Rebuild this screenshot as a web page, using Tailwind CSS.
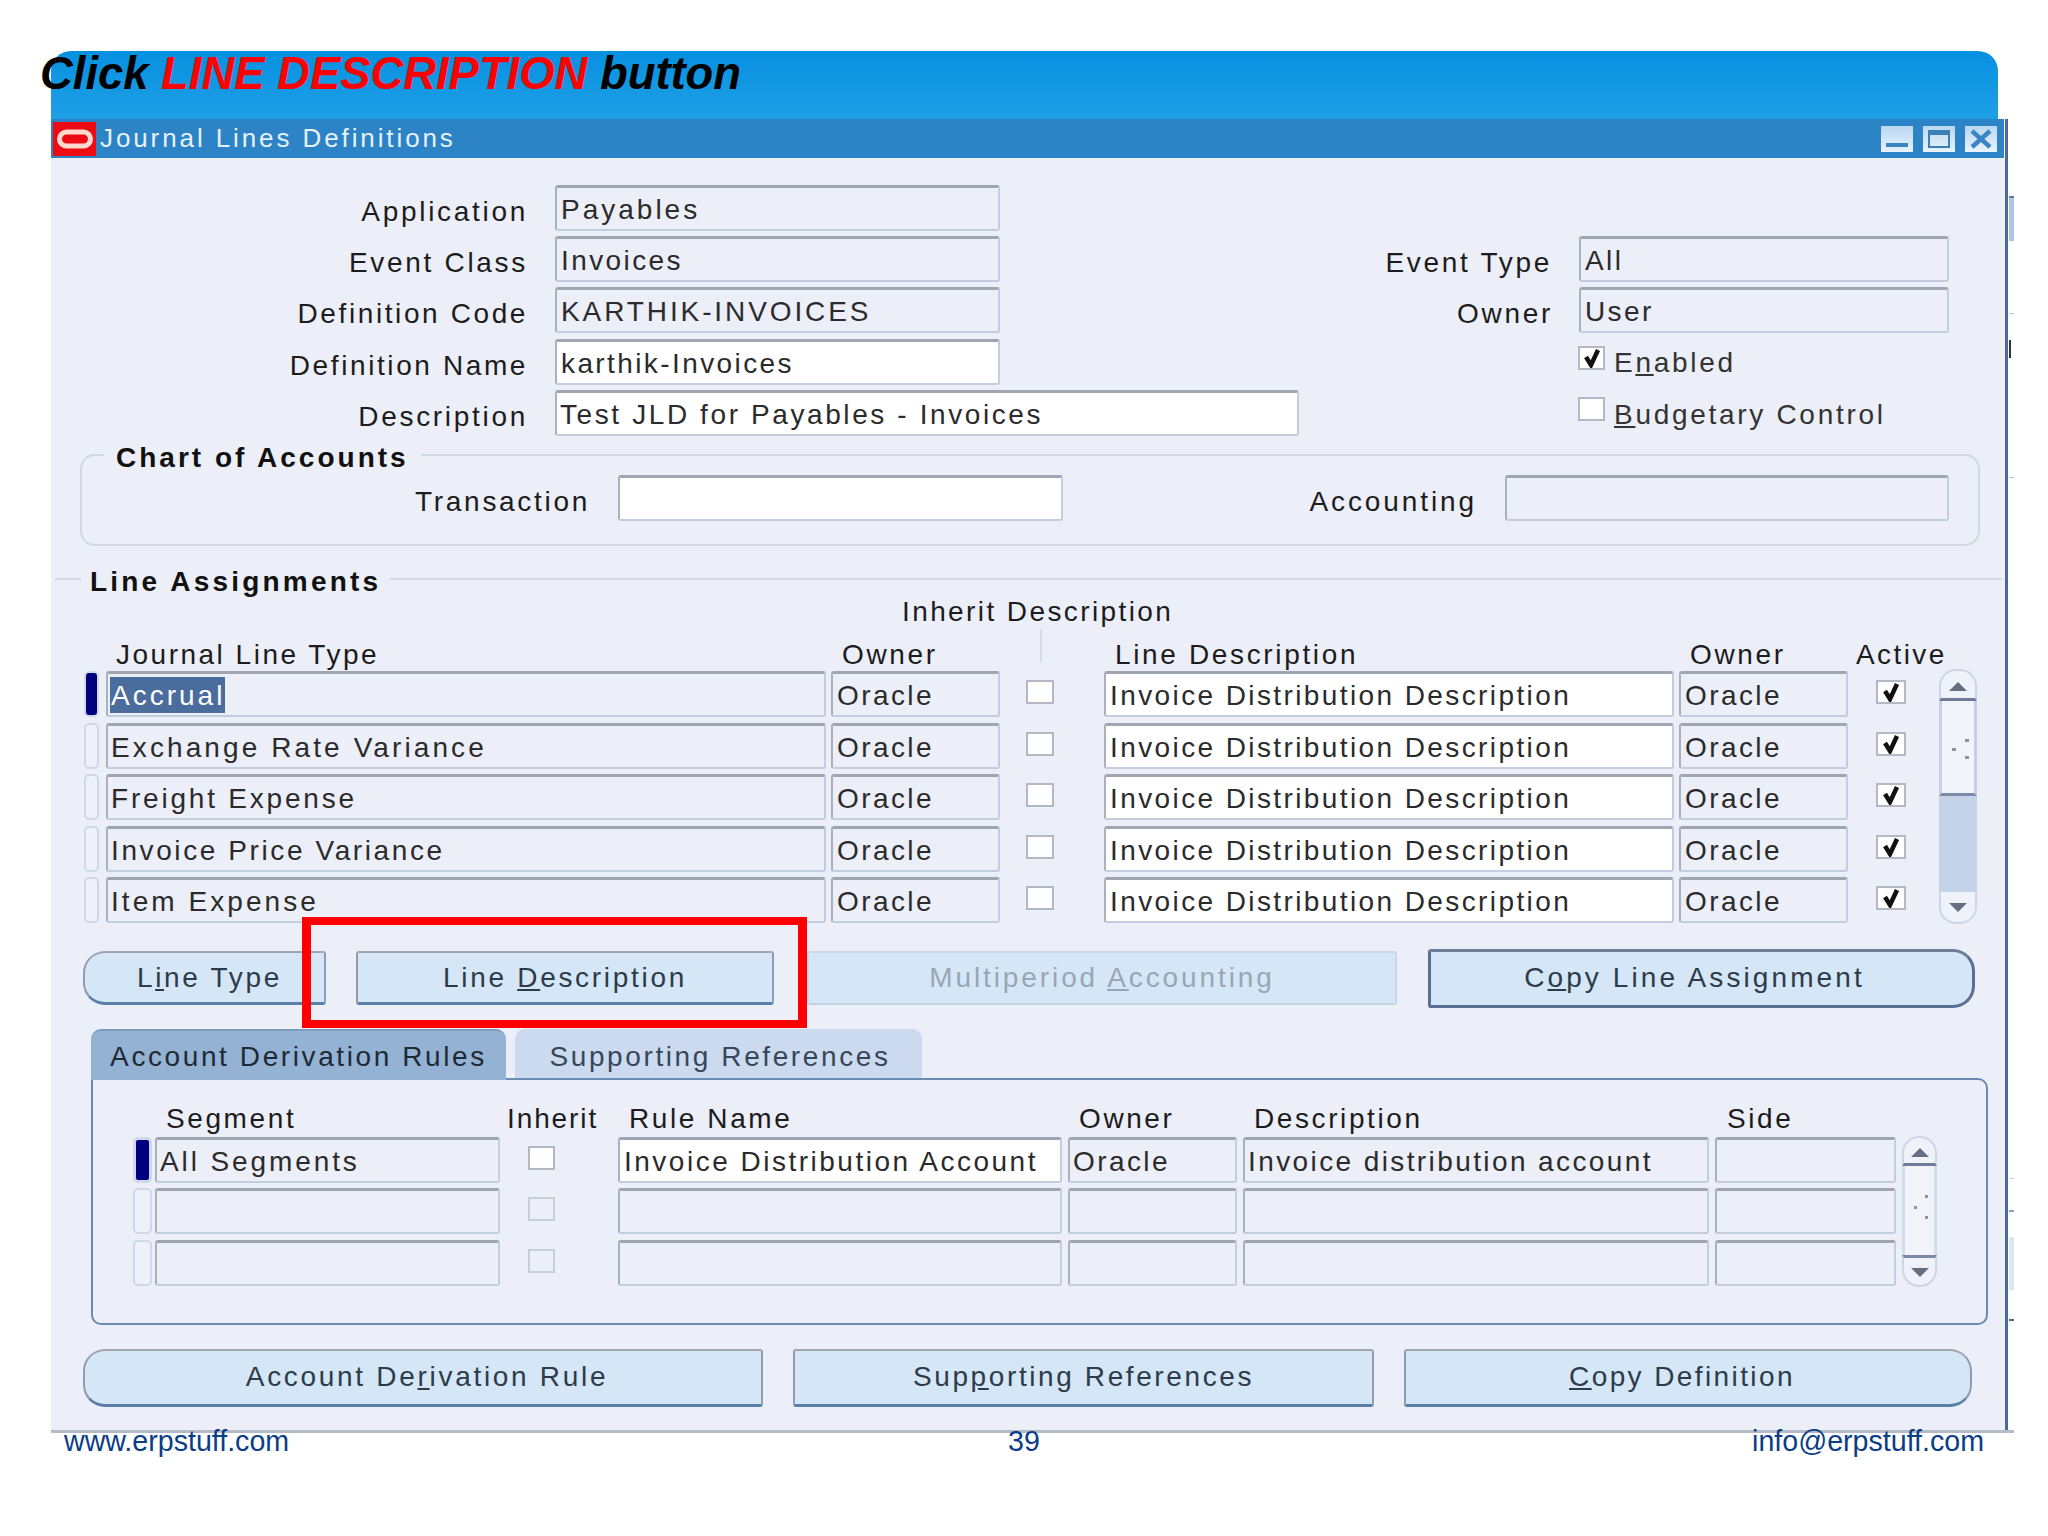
<!DOCTYPE html>
<html lang="en">
<head>
  <meta charset="UTF-8">
  <title>Journal Lines Definitions</title>
  <script src="https://cdn.jsdelivr.net/npm/@tailwindcss/browser@4"></script>
</head>
<body class="bg-white">
<div class="relative w-[2048px] h-[1536px] overflow-hidden bg-white pt-[51px] font-['Liberation_Sans',sans-serif] text-[28px] leading-none tracking-[2.4px] text-[#2b2b2b]">

  <!-- bits of the window behind -->
  <div class="absolute left-[2009px] top-[196px] w-[5px] h-[45px] bg-[#a9c6e2] border-t-2 border-[#5c7ba6]"></div>
  <div class="absolute left-[2009px] top-[313px] w-[5px] h-[1px] bg-[#b8c4d6]"></div>
  <div class="absolute left-[2009px] top-[340px] w-[2px] h-[18px] bg-[#333333]"></div>
  <div class="absolute left-[2009px] top-[477px] w-[5px] h-[1px] bg-[#b8c4d6]"></div>
  <div class="absolute left-[2009px] top-[1178px] w-[5px] h-[1px] bg-[#c8d2e0]"></div>
  <div class="absolute left-[2009px] top-[1210px] w-[5px] h-[27px] border-t-2 border-[#8ea3c0] bg-white"></div>
  <div class="absolute left-[2009px] top-[1237px] w-[5px] h-[53px] bg-[#dbe6f3]"></div>
  <div class="absolute left-[2009px] top-[1319px] w-[5px] h-[2px] bg-[#4c6a99]"></div>

  <!-- slide heading -->
  <div class="ml-[51px] w-[1947px] h-[68px] rounded-t-[20px] bg-gradient-to-b from-[#0590e0] to-[#1ea0e6]">
    <h1 class="-ml-[11px] text-[45.4px] leading-[45px] tracking-normal font-bold italic text-black whitespace-nowrap">Click <span class="text-[#ff0000]">LINE DESCRIPTION</span> button</h1>
  </div>

  <!-- window -->
  <div class="ml-[51px] w-[1957px] border-r-[3px] border-[#4c6a99]">
    <div class="flex items-center h-[39px] w-[1953px] bg-[#2c84c6]">
      <div class="flex items-center justify-center ml-[2px] w-[43px] h-[34px] bg-[#ee0a12]">
        <svg width="36" height="20" viewBox="0 0 36 20"><rect x="2.5" y="3" width="31" height="14" rx="7" fill="none" stroke="#ffd8d0" stroke-width="5"/></svg>
      </div>
      <span class="ml-[4px] -mt-[2px] text-[26px] tracking-[2.9px] text-[#e6f1fc]">Journal Lines Definitions</span>
      <div class="ml-auto mr-[7px] flex gap-[10px]">
        <div class="w-[32px] h-[26px] bg-gradient-to-b from-[#b9d7f0] to-[#e8f3fc]"><svg width="32" height="26" viewBox="0 0 32 26"><rect x="5" y="17" width="22" height="4" fill="#3a86c4"/></svg></div>
        <div class="w-[32px] h-[26px] bg-gradient-to-b from-[#b9d7f0] to-[#e8f3fc]"><svg width="32" height="26" viewBox="0 0 32 26"><rect x="6" y="5" width="20" height="16" fill="none" stroke="#3a7fb8" stroke-width="2"/><rect x="6" y="5" width="20" height="4" fill="#3a7fb8"/></svg></div>
        <div class="w-[32px] h-[26px] bg-gradient-to-b from-[#b9d7f0] to-[#e8f3fc]"><svg width="32" height="26" viewBox="0 0 32 26"><path d="M7 5 L25 21 M25 5 L7 21" stroke="#3a86c4" stroke-width="4.5"/></svg></div>
      </div>
    </div>

    <div class="h-[1272px] bg-[#eceef8]">

      <!-- header fields -->
      <div class="grid grid-cols-[504px_445px_550px_398px] gap-y-[5.2px] pt-[27px] items-start">
        <div class="pr-[27px] pt-[13px] text-right tracking-[2.7px] text-[#1c1c1c]">Application</div>
        <div class="flex items-center h-[46px] rounded-[3px] border-2 border-t-[3px] border-[#c3cde0] border-t-[#a1a5b1] border-l-[#aab0bd] bg-[#eceef8] pl-[4px] pt-[3px] tracking-[3px] whitespace-nowrap">Payables</div>
        <div></div><div></div>

        <div class="pr-[27px] pt-[13px] text-right tracking-[2.7px] text-[#1c1c1c]">Event Class</div>
        <div class="flex items-center h-[46px] rounded-[3px] border-2 border-t-[3px] border-[#c3cde0] border-t-[#a1a5b1] border-l-[#aab0bd] bg-[#eceef8] pl-[4px] pt-[3px] whitespace-nowrap">Invoices</div>
        <div class="pt-[13px] text-right tracking-[2.7px] text-[#1c1c1c]"><span class="relative left-[2px]">Event Type</span></div>
        <div class="ml-[29px] w-[370px] flex items-center h-[46px] rounded-[3px] border-2 border-t-[3px] border-[#c3cde0] border-t-[#a1a5b1] border-l-[#aab0bd] bg-[#eceef8] pl-[4px] pt-[3px] whitespace-nowrap">All</div>

        <div class="pr-[27px] pt-[13px] text-right tracking-[2.6px] text-[#1c1c1c]">Definition Code</div>
        <div class="flex items-center h-[46px] rounded-[3px] border-2 border-t-[3px] border-[#c3cde0] border-t-[#a1a5b1] border-l-[#aab0bd] bg-[#eceef8] pl-[4px] pt-[3px] tracking-[2.9px] whitespace-nowrap">KARTHIK-INVOICES</div>
        <div class="pt-[13px] text-right tracking-[2.7px] text-[#1c1c1c]"><span class="relative left-[3px]">Owner</span></div>
        <div class="ml-[29px] w-[370px] flex items-center h-[46px] rounded-[3px] border-2 border-t-[3px] border-[#c3cde0] border-t-[#a1a5b1] border-l-[#aab0bd] bg-[#eceef8] pl-[4px] pt-[3px] whitespace-nowrap">User</div>

        <div class="pr-[27px] pt-[13px] text-right tracking-[2.6px] text-[#1c1c1c]">Definition Name</div>
        <div class="flex items-center h-[46px] rounded-[3px] border-2 border-t-[3px] border-[#c3cde0] border-t-[#a1a5b1] border-l-[#aab0bd] bg-white pl-[4px] pt-[3px] whitespace-nowrap">karthik-Invoices</div>
        <div></div>
        <div class="ml-[28px] flex items-center h-[46px]">
          <span class="flex items-center justify-center -mt-[8px] w-[27px] h-[24px] border-2 border-[#b4b8c4] bg-white">
            <svg width="18" height="20" viewBox="0 0 18 20"><path d="M3 9 L8 17 L15 2" fill="none" stroke="#111" stroke-width="4.5"/></svg>
          </span>
          <span class="ml-[9px] pt-[3px] tracking-[2.7px] text-[#333]">E<u>n</u>abled</span>
        </div>

        <div class="pr-[27px] pt-[13px] text-right tracking-[2.7px] text-[#1c1c1c]">Description</div>
        <div class="col-span-2 w-[744px] flex items-center h-[46px] rounded-[3px] border-2 border-t-[3px] border-[#c3cde0] border-t-[#a1a5b1] border-l-[#aab0bd] bg-white pl-[3px] pt-[3px] tracking-[2.6px] whitespace-nowrap">Test JLD for Payables - Invoices</div>
        <div class="ml-[28px] flex items-center h-[46px]">
          <span class="-mt-[8px] w-[27px] h-[24px] border-2 border-[#b4b8c4] bg-white"></span>
          <span class="ml-[9px] pt-[5px] tracking-[2.7px] text-[#333]"><u>B</u>udgetary Control</span>
        </div>
      </div>

      <!-- chart of accounts -->
      <div class="relative mt-[18px] ml-[29px] w-[1900px] h-[92px] rounded-[15px] border-2 border-[#d0d8e6]">
        <div class="absolute -top-[13px] left-[22px] bg-[#eceef8] px-[12px] h-[30px] flex items-center font-bold tracking-[3px] text-[#111] whitespace-nowrap">Chart of Accounts</div>
        <div class="flex items-start pt-[19px]">
          <div class="w-[508px] pt-[13px] text-right tracking-[2.7px] text-[#1c1c1c]">Transaction</div>
          <div class="ml-[28px] w-[445px] h-[46px] rounded-[3px] border-2 border-t-[3px] border-[#c3cde0] border-t-[#a1a5b1] border-l-[#aab0bd] bg-white"></div>
          <div class="w-[414px] pt-[13px] text-right tracking-[2.9px] text-[#1c1c1c]">Accounting</div>
          <div class="ml-[28px] w-[444px] h-[46px] rounded-[3px] border-2 border-t-[3px] border-[#c3cde0] border-t-[#a1a5b1] border-l-[#aab0bd] bg-[#eceef8]"></div>
        </div>
      </div>

      <!-- line assignments -->
      <div class="flex items-center mt-[17px] ml-[4px] w-[1947px] h-[32px]">
        <div class="w-[26px] h-[2px] bg-[#d0d8e6]"></div>
        <span class="px-[9px] pt-[6px] font-bold tracking-[3.2px] text-[#111] whitespace-nowrap">Line Assignments</span>
        <div class="flex-1 h-[2px] bg-[#d0d8e6]"></div>
      </div>
      <div class="flex items-center h-[34px] ml-[851px] tracking-[2.4px] text-[#1c1c1c]">Inherit Description</div>

      <div class="flex ml-[33px] mt-[9px]">
        <div class="grid grid-cols-[22px_725px_195px_78px_575px_197px_30px] gap-y-[5.25px] items-start">
          <div></div>
          <div class="h-[28px] flex items-center pl-[10px] pt-[6px] tracking-[2.5px] text-[#1c1c1c]">Journal Line Type</div>
          <div class="h-[28px] flex items-center pl-[11px] pt-[6px] tracking-[2.65px] text-[#1c1c1c]">Owner</div>
          <div class="h-[28px]"><div class="-mt-[9px] ml-[14px] w-[2px] h-[33px] bg-[#d5dcea]"></div></div>
          <div class="h-[28px] flex items-center pl-[11px] pt-[6px] tracking-[2.65px] text-[#1c1c1c]">Line Description</div>
          <div class="h-[28px] flex items-center pl-[11px] pt-[6px] tracking-[2.65px] text-[#1c1c1c]">Owner</div>
          <div class="h-[28px] flex items-center -ml-[20px] pt-[6px] text-[#1c1c1c]">Active</div>

          <!-- row 1 -->
          <div class="w-[15px] h-[46px] rounded-[5px] border-2 border-[#cdd8ea] bg-[#00007f]"></div>
          <div class="w-[720px] flex items-center h-[46px] rounded-[3px] border-2 border-t-[3px] border-[#c3cde0] border-t-[#a1a5b1] border-l-[#aab0bd] bg-[#eceef8] pl-[2px] whitespace-nowrap"><span class="flex items-center h-[36px] bg-[#4a6d9e] text-white pl-[1px] pt-[3px] tracking-[3px]">Accrual</span></div>
          <div class="w-[169px] flex items-center h-[46px] rounded-[3px] border-2 border-t-[3px] border-[#c3cde0] border-t-[#a1a5b1] border-l-[#aab0bd] bg-[#eceef8] pl-[4px] pt-[3px] whitespace-nowrap">Oracle</div>
          <div class="mt-[9px] w-[28px] h-[24px] border-2 border-[#b4b8c4] bg-white"></div>
          <div class="w-[570px] flex items-center h-[46px] rounded-[3px] border-2 border-t-[3px] border-[#c3cde0] border-t-[#a1a5b1] border-l-[#aab0bd] bg-white pl-[4px] pt-[3px] tracking-[2.4px] whitespace-nowrap">Invoice Distribution Description</div>
          <div class="w-[169px] flex items-center h-[46px] rounded-[3px] border-2 border-t-[3px] border-[#c3cde0] border-t-[#a1a5b1] border-l-[#aab0bd] bg-[#eceef8] pl-[4px] pt-[3px] whitespace-nowrap">Oracle</div>
          <div class="mt-[9px] flex items-center justify-center w-[30px] h-[24px] border-2 border-[#b4b8c4] bg-white"><svg width="20" height="20" viewBox="0 0 20 20"><path d="M4 9 L9 17 L16 2" fill="none" stroke="#111" stroke-width="4.5"/></svg></div>

          <!-- row 2 -->
          <div class="w-[15px] h-[46px] rounded-[5px] border-2 border-[#cdd8ea] bg-[#eef0fa]"></div>
          <div class="w-[720px] flex items-center h-[46px] rounded-[3px] border-2 border-t-[3px] border-[#c3cde0] border-t-[#a1a5b1] border-l-[#aab0bd] bg-[#eceef8] pl-[3px] pt-[3px] tracking-[3.1px] whitespace-nowrap">Exchange Rate Variance</div>
          <div class="w-[169px] flex items-center h-[46px] rounded-[3px] border-2 border-t-[3px] border-[#c3cde0] border-t-[#a1a5b1] border-l-[#aab0bd] bg-[#eceef8] pl-[4px] pt-[3px] whitespace-nowrap">Oracle</div>
          <div class="mt-[9px] w-[28px] h-[24px] border-2 border-[#b4b8c4] bg-white"></div>
          <div class="w-[570px] flex items-center h-[46px] rounded-[3px] border-2 border-t-[3px] border-[#c3cde0] border-t-[#a1a5b1] border-l-[#aab0bd] bg-white pl-[4px] pt-[3px] tracking-[2.4px] whitespace-nowrap">Invoice Distribution Description</div>
          <div class="w-[169px] flex items-center h-[46px] rounded-[3px] border-2 border-t-[3px] border-[#c3cde0] border-t-[#a1a5b1] border-l-[#aab0bd] bg-[#eceef8] pl-[4px] pt-[3px] whitespace-nowrap">Oracle</div>
          <div class="mt-[9px] flex items-center justify-center w-[30px] h-[24px] border-2 border-[#b4b8c4] bg-white"><svg width="20" height="20" viewBox="0 0 20 20"><path d="M4 9 L9 17 L16 2" fill="none" stroke="#111" stroke-width="4.5"/></svg></div>

          <!-- row 3 -->
          <div class="w-[15px] h-[46px] rounded-[5px] border-2 border-[#cdd8ea] bg-[#eef0fa]"></div>
          <div class="w-[720px] flex items-center h-[46px] rounded-[3px] border-2 border-t-[3px] border-[#c3cde0] border-t-[#a1a5b1] border-l-[#aab0bd] bg-[#eceef8] pl-[3px] pt-[3px] tracking-[2.8px] whitespace-nowrap">Freight Expense</div>
          <div class="w-[169px] flex items-center h-[46px] rounded-[3px] border-2 border-t-[3px] border-[#c3cde0] border-t-[#a1a5b1] border-l-[#aab0bd] bg-[#eceef8] pl-[4px] pt-[3px] whitespace-nowrap">Oracle</div>
          <div class="mt-[9px] w-[28px] h-[24px] border-2 border-[#b4b8c4] bg-white"></div>
          <div class="w-[570px] flex items-center h-[46px] rounded-[3px] border-2 border-t-[3px] border-[#c3cde0] border-t-[#a1a5b1] border-l-[#aab0bd] bg-white pl-[4px] pt-[3px] tracking-[2.4px] whitespace-nowrap">Invoice Distribution Description</div>
          <div class="w-[169px] flex items-center h-[46px] rounded-[3px] border-2 border-t-[3px] border-[#c3cde0] border-t-[#a1a5b1] border-l-[#aab0bd] bg-[#eceef8] pl-[4px] pt-[3px] whitespace-nowrap">Oracle</div>
          <div class="mt-[9px] flex items-center justify-center w-[30px] h-[24px] border-2 border-[#b4b8c4] bg-white"><svg width="20" height="20" viewBox="0 0 20 20"><path d="M4 9 L9 17 L16 2" fill="none" stroke="#111" stroke-width="4.5"/></svg></div>

          <!-- row 4 -->
          <div class="w-[15px] h-[46px] rounded-[5px] border-2 border-[#cdd8ea] bg-[#eef0fa]"></div>
          <div class="w-[720px] flex items-center h-[46px] rounded-[3px] border-2 border-t-[3px] border-[#c3cde0] border-t-[#a1a5b1] border-l-[#aab0bd] bg-[#eceef8] pl-[3px] pt-[3px] tracking-[2.6px] whitespace-nowrap">Invoice Price Variance</div>
          <div class="w-[169px] flex items-center h-[46px] rounded-[3px] border-2 border-t-[3px] border-[#c3cde0] border-t-[#a1a5b1] border-l-[#aab0bd] bg-[#eceef8] pl-[4px] pt-[3px] whitespace-nowrap">Oracle</div>
          <div class="mt-[9px] w-[28px] h-[24px] border-2 border-[#b4b8c4] bg-white"></div>
          <div class="w-[570px] flex items-center h-[46px] rounded-[3px] border-2 border-t-[3px] border-[#c3cde0] border-t-[#a1a5b1] border-l-[#aab0bd] bg-white pl-[4px] pt-[3px] tracking-[2.4px] whitespace-nowrap">Invoice Distribution Description</div>
          <div class="w-[169px] flex items-center h-[46px] rounded-[3px] border-2 border-t-[3px] border-[#c3cde0] border-t-[#a1a5b1] border-l-[#aab0bd] bg-[#eceef8] pl-[4px] pt-[3px] whitespace-nowrap">Oracle</div>
          <div class="mt-[9px] flex items-center justify-center w-[30px] h-[24px] border-2 border-[#b4b8c4] bg-white"><svg width="20" height="20" viewBox="0 0 20 20"><path d="M4 9 L9 17 L16 2" fill="none" stroke="#111" stroke-width="4.5"/></svg></div>

          <!-- row 5 -->
          <div class="w-[15px] h-[46px] rounded-[5px] border-2 border-[#cdd8ea] bg-[#eef0fa]"></div>
          <div class="w-[720px] flex items-center h-[46px] rounded-[3px] border-2 border-t-[3px] border-[#c3cde0] border-t-[#a1a5b1] border-l-[#aab0bd] bg-[#eceef8] pl-[3px] pt-[3px] tracking-[3.05px] whitespace-nowrap">Item Expense</div>
          <div class="w-[169px] flex items-center h-[46px] rounded-[3px] border-2 border-t-[3px] border-[#c3cde0] border-t-[#a1a5b1] border-l-[#aab0bd] bg-[#eceef8] pl-[4px] pt-[3px] whitespace-nowrap">Oracle</div>
          <div class="mt-[9px] w-[28px] h-[24px] border-2 border-[#b4b8c4] bg-white"></div>
          <div class="w-[570px] flex items-center h-[46px] rounded-[3px] border-2 border-t-[3px] border-[#c3cde0] border-t-[#a1a5b1] border-l-[#aab0bd] bg-white pl-[4px] pt-[3px] tracking-[2.4px] whitespace-nowrap">Invoice Distribution Description</div>
          <div class="w-[169px] flex items-center h-[46px] rounded-[3px] border-2 border-t-[3px] border-[#c3cde0] border-t-[#a1a5b1] border-l-[#aab0bd] bg-[#eceef8] pl-[4px] pt-[3px] whitespace-nowrap">Oracle</div>
          <div class="mt-[9px] flex items-center justify-center w-[30px] h-[24px] border-2 border-[#b4b8c4] bg-white"><svg width="20" height="20" viewBox="0 0 20 20"><path d="M4 9 L9 17 L16 2" fill="none" stroke="#111" stroke-width="4.5"/></svg></div>
        </div>

        <!-- scrollbar -->
        <div class="ml-[33px] mt-[31px] w-[38px] h-[255px] flex flex-col">
          <div class="h-[32px] rounded-t-[17px] border-2 border-b-[3px] border-[#ced6e6] border-b-[#6f7b97] bg-[#f0f2fa] flex justify-center pt-[11px]"><svg width="18" height="9" viewBox="0 0 18 9"><path d="M9 0 L18 9 L0 9 Z" fill="#666f80"/></svg></div>
          <div class="h-[95px] border-x-[3px] border-b-[3px] border-[#c3d0e6] border-b-[#7d8aa5] bg-[#f2f3fb]">
            <svg width="32" height="92" viewBox="0 0 32 92"><g fill="#8b93a6"><rect x="10" y="47" width="4" height="3"/><rect x="23" y="38" width="4" height="3"/><rect x="23" y="55" width="4" height="3"/></g></svg>
          </div>
          <div class="flex-1 bg-[#c5d3e8]"></div>
          <div class="h-[32px] rounded-b-[17px] border-2 border-t-0 border-[#ced6e6] bg-[#f0f2fa] flex justify-center pt-[11px]"><svg width="18" height="9" viewBox="0 0 18 9"><path d="M0 0 L18 0 L9 9 Z" fill="#666f80"/></svg></div>
        </div>
      </div>

      <!-- line buttons -->
      <div class="flex items-center ml-[32px] mt-[25px] h-[59px] text-[#2d3b4a]">
        <div class="flex items-center justify-center w-[243px] h-[54px] pl-[10px] rounded-l-[22px] rounded-r-[3px] border-2 border-[#8f9db0] border-t-[#a0a5ae] border-b-[3px] border-b-[#5a7fa8] bg-[#d5e6f6]"><span class="tracking-[2.7px]">L<u>i</u>ne Type</span></div>
        <div class="flex items-center justify-center ml-[30px] w-[418px] h-[54px] rounded-[3px] border-2 border-[#8f9db0] border-t-[#a0a5ae] border-b-[3px] border-b-[#5a7fa8] bg-[#d5e6f6]"><span class="tracking-[2.7px]">Line <u>D</u>escription</span></div>
        <div class="flex items-center justify-center ml-[33px] w-[590px] h-[54px] rounded-[3px] border-2 border-[#cdd6e4] border-b-[#c3d3e6] bg-[#d5e6f6] text-[#98a6b6]"><span class="tracking-[2.9px]">Multiperiod <u>A</u>ccounting</span></div>
        <div class="flex items-center justify-center ml-[31px] w-[547px] h-[59px] pr-[14px] rounded-l-[3px] rounded-r-[22px] border-[3px] border-[#5a6f93] border-t-[#6e7d97] bg-[#d5e6f6]"><span class="tracking-[3.1px]">C<u>o</u>py Line Assignment</span></div>
      </div>

      <!-- tabs -->
      <div class="flex ml-[40px] mt-[21px] h-[49px] text-[#1f2a36]">
        <div class="relative z-10 flex items-center justify-center w-[415px] h-[51px] pt-[3px] rounded-t-[10px] border-t-2 border-[#7b9bbf] bg-[#93b2d4] tracking-[2.6px]">Account Derivation Rules</div>
        <div class="flex items-center justify-center ml-[9px] w-[407px] h-[49px] pt-[7px] pl-[3px] rounded-t-[10px] bg-[#ccdaf0] text-[#37475a] tracking-[2.6px]">Supporting References</div>
      </div>

      <div class="ml-[40px] w-[1897px] h-[247px] rounded-[10px] rounded-tl-none border-2 border-[#6b8cb2]">
        <div class="flex pl-[40px] pt-[21px]">
          <div class="grid grid-cols-[22px_373px_90px_450px_175px_472px_181px] gap-y-[5.4px] items-start">
            <div></div>
            <div class="h-[30px] flex items-center pl-[11px] pt-[6px] tracking-[2.6px] text-[#1c1c1c]">Segment</div>
            <div class="h-[30px] flex items-center -ml-[21px] pt-[6px] tracking-[1.9px] text-[#1c1c1c]">Inherit</div>
            <div class="h-[30px] flex items-center pl-[11px] pt-[6px] tracking-[2.6px] text-[#1c1c1c]">Rule Name</div>
            <div class="h-[30px] flex items-center pl-[11px] pt-[6px] tracking-[2.6px] text-[#1c1c1c]">Owner</div>
            <div class="h-[30px] flex items-center pl-[11px] pt-[6px] tracking-[2.6px] text-[#1c1c1c]">Description</div>
            <div class="h-[30px] flex items-center pl-[12px] pt-[6px] tracking-[2.6px] text-[#1c1c1c]">Side</div>

            <div class="w-[19px] h-[46px] rounded-[5px] border-[3px] border-[#cdd8ea] bg-[#00007f]"></div>
            <div class="w-[345px] flex items-center h-[46px] rounded-[3px] border-2 border-t-[3px] border-[#c3cde0] border-t-[#a1a5b1] border-l-[#aab0bd] bg-[#eceef8] pl-[3px] pt-[3px] tracking-[2.9px] whitespace-nowrap">All Segments</div>
            <div class="mt-[9px] w-[27px] h-[24px] border-2 border-[#b4b8c4] bg-white"></div>
            <div class="w-[444px] flex items-center h-[46px] rounded-[3px] border-2 border-t-[3px] border-[#c3cde0] border-t-[#a1a5b1] border-l-[#aab0bd] bg-white pl-[4px] pt-[3px] tracking-[2.5px] whitespace-nowrap">Invoice Distribution Account</div>
            <div class="w-[169px] flex items-center h-[46px] rounded-[3px] border-2 border-t-[3px] border-[#c3cde0] border-t-[#a1a5b1] border-l-[#aab0bd] bg-[#eceef8] pl-[3px] pt-[3px] whitespace-nowrap">Oracle</div>
            <div class="w-[466px] flex items-center h-[46px] rounded-[3px] border-2 border-t-[3px] border-[#c3cde0] border-t-[#a1a5b1] border-l-[#aab0bd] bg-[#eceef8] pl-[3px] pt-[3px] tracking-[2.4px] whitespace-nowrap">Invoice distribution account</div>
            <div class="w-[181px] h-[46px] rounded-[3px] border-2 border-t-[3px] border-[#c3cde0] border-t-[#a1a5b1] border-l-[#aab0bd] bg-[#eceef8]"></div>

            <div class="w-[19px] h-[46px] rounded-[5px] border-2 border-[#cdd8ea] bg-[#eef0fa]"></div>
            <div class="w-[345px] h-[46px] rounded-[3px] border-2 border-t-[3px] border-[#c3cde0] border-t-[#a1a5b1] border-l-[#aab0bd] bg-[#eceef8]"></div>
            <div class="mt-[9px] w-[27px] h-[24px] border-2 border-[#c9cdd8] bg-[#eceef8]"></div>
            <div class="w-[444px] h-[46px] rounded-[3px] border-2 border-t-[3px] border-[#c3cde0] border-t-[#a1a5b1] border-l-[#aab0bd] bg-[#eceef8]"></div>
            <div class="w-[169px] h-[46px] rounded-[3px] border-2 border-t-[3px] border-[#c3cde0] border-t-[#a1a5b1] border-l-[#aab0bd] bg-[#eceef8]"></div>
            <div class="w-[466px] h-[46px] rounded-[3px] border-2 border-t-[3px] border-[#c3cde0] border-t-[#a1a5b1] border-l-[#aab0bd] bg-[#eceef8]"></div>
            <div class="w-[181px] h-[46px] rounded-[3px] border-2 border-t-[3px] border-[#c3cde0] border-t-[#a1a5b1] border-l-[#aab0bd] bg-[#eceef8]"></div>

            <div class="w-[19px] h-[46px] rounded-[5px] border-2 border-[#cdd8ea] bg-[#eef0fa]"></div>
            <div class="w-[345px] h-[46px] rounded-[3px] border-2 border-t-[3px] border-[#c3cde0] border-t-[#a1a5b1] border-l-[#aab0bd] bg-[#eceef8]"></div>
            <div class="mt-[9px] w-[27px] h-[24px] border-2 border-[#c9cdd8] bg-[#eceef8]"></div>
            <div class="w-[444px] h-[46px] rounded-[3px] border-2 border-t-[3px] border-[#c3cde0] border-t-[#a1a5b1] border-l-[#aab0bd] bg-[#eceef8]"></div>
            <div class="w-[169px] h-[46px] rounded-[3px] border-2 border-t-[3px] border-[#c3cde0] border-t-[#a1a5b1] border-l-[#aab0bd] bg-[#eceef8]"></div>
            <div class="w-[466px] h-[46px] rounded-[3px] border-2 border-t-[3px] border-[#c3cde0] border-t-[#a1a5b1] border-l-[#aab0bd] bg-[#eceef8]"></div>
            <div class="w-[181px] h-[46px] rounded-[3px] border-2 border-t-[3px] border-[#c3cde0] border-t-[#a1a5b1] border-l-[#aab0bd] bg-[#eceef8]"></div>
          </div>

          <!-- scrollbar -->
          <div class="ml-[6px] mt-[35px] w-[35px] h-[151px] flex flex-col">
            <div class="h-[30px] rounded-t-[17px] border-2 border-b-[3px] border-[#ced6e6] border-b-[#6f7b97] bg-[#f0f2fa] flex justify-center pt-[10px]"><svg width="18" height="9" viewBox="0 0 18 9"><path d="M9 0 L18 9 L0 9 Z" fill="#666f80"/></svg></div>
            <div class="flex-1 border-x-[3px] border-[#d3dcec] bg-[#f2f3fb]">
              <svg width="29" height="88" viewBox="0 0 29 88"><g fill="#8b93a6"><rect x="9" y="40" width="3" height="3"/><rect x="20" y="29" width="3" height="3"/><rect x="20" y="50" width="3" height="3"/></g></svg>
            </div>
            <div class="h-[32px] rounded-b-[17px] border-2 border-t-[3px] border-[#ced6e6] border-t-[#7d8aa5] bg-[#f0f2fa] flex justify-center pt-[10px]"><svg width="18" height="9" viewBox="0 0 18 9"><path d="M0 0 L18 0 L9 9 Z" fill="#666f80"/></svg></div>
          </div>
        </div>
      </div>

      <!-- bottom buttons -->
      <div class="flex ml-[32px] mt-[24px] h-[58px] text-[#2d3b4a]">
        <div class="flex items-center justify-center w-[680px] pl-[8px] rounded-l-[22px] rounded-r-[3px] border-2 border-[#8f9db0] border-t-[#a0a5ae] border-b-[3px] border-b-[#5a7fa8] bg-[#d5e6f6]"><span class="tracking-[2.7px]">Account De<u>r</u>ivation Rule</span></div>
        <div class="flex items-center justify-center ml-[30px] w-[581px] rounded-[3px] border-2 border-[#8f9db0] border-t-[#a0a5ae] border-b-[3px] border-b-[#5a7fa8] bg-[#d5e6f6]"><span class="tracking-[2.6px]">Sup<u>p</u>orting References</span></div>
        <div class="flex items-center justify-center ml-[30px] w-[568px] pr-[12px] rounded-l-[3px] rounded-r-[22px] border-2 border-[#8f9db0] border-t-[#a0a5ae] border-b-[3px] border-b-[#5a7fa8] bg-[#d5e6f6]"><span><u>C</u>opy Definition</span></div>
      </div>
    </div>
  </div>
  <div class="ml-[51px] w-[1963px] h-[3px] bg-[#b4bac6]"></div>

  <!-- footer -->
  <div class="grid grid-cols-[1fr_auto_1fr] -mt-[6px] ml-[64px] w-[1920px] text-[28.6px] tracking-normal text-[#0b3d86]">
    <span>www.erpstuff.com</span>
    <span>39</span>
    <span class="text-right">info@erpstuff.com</span>
  </div>

  <!-- red highlight round the button -->
  <div class="absolute left-[302px] top-[917px] w-[505px] h-[111px] border-x-[9px] border-y-[8px] border-[#ff0000]"></div>
</div>
</body>
</html>
